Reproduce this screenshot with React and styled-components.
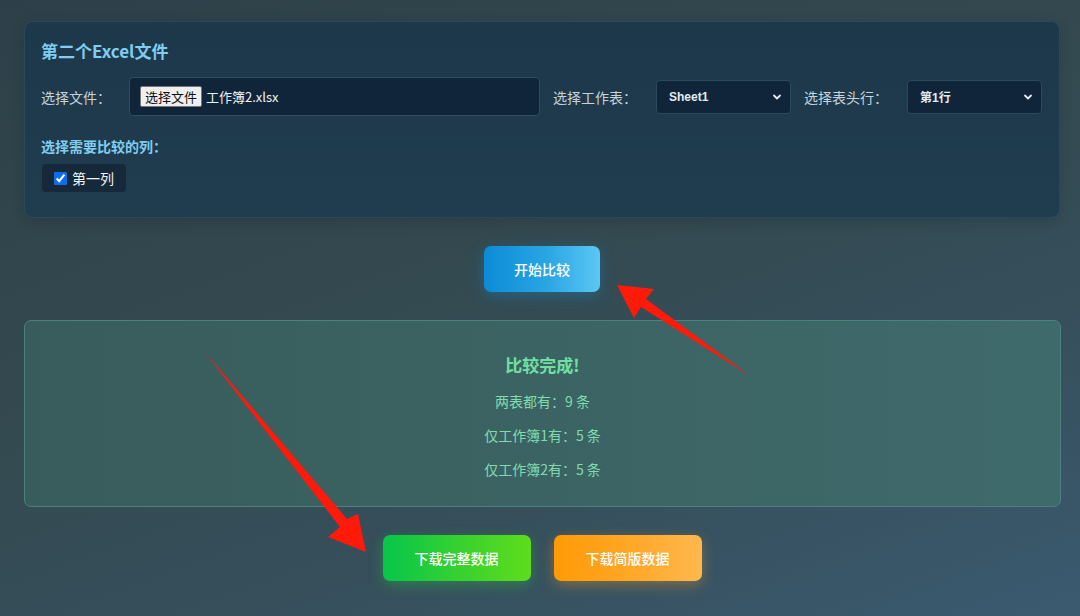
import React from "react";
import styled, { createGlobalStyle } from "styled-components";

const GlobalStyle = createGlobalStyle`
  html, body { margin: 0; padding: 0; }
  body {
    width: 1080px;
    height: 616px;
    overflow: hidden;
    background: linear-gradient(160deg, #2d4049 0%, #33494f 40%, #364f5b 70%, #3b5a70 100%);
    font-family: "Noto Sans CJK SC", "Noto Sans", sans-serif;
  }
`;

const Page = styled.div`
  position: relative;
  display: flex;
  flex-direction: column;
  align-items: stretch;
  padding: 21px 20px 0 24px;
  height: 616px;
  box-sizing: border-box;
`;

const Card = styled.section`
  background: linear-gradient(180deg, #1e384b 0%, #203c4f 100%);
  border: 1px solid #2a4a5c;
  border-radius: 9px;
  padding: 18px 17px 25px 16px;
  box-shadow: 0 4px 14px rgba(0, 0, 0, 0.15);
`;

const CardTitle = styled.h3`
  margin: 0;
  font-size: 17px;
  line-height: 22px;
  font-weight: 700;
  color: #7fcdf0;
`;

const Row = styled.div`
  display: flex;
  align-items: center;
  gap: 13px;
  margin-top: 15px;
  height: 39px;
`;

const Field = styled.div`
  display: flex;
  align-items: center;
  flex: ${(p) => (p.$grow ? 1 : "none")};
`;

const Label = styled.span`
  font-size: 14px;
  color: #c6d3dc;
  margin-right: ${(p) => p.$gap}px;
  white-space: nowrap;
`;

const FileBox = styled.div`
  flex: 1;
  height: 39px;
  box-sizing: border-box;
  display: flex;
  align-items: center;
  gap: 4px;
  padding: 0 10px;
  background: #10253a;
  border: 1px solid #2c4e62;
  border-radius: 4px;
`;

const FileButton = styled.button`
  font-family: "Noto Sans CJK SC", sans-serif;
  font-size: 13px;
  line-height: 18px;
  padding: 0 4px;
  height: 21px;
  background: #efefef;
  color: #111;
  border: 1px solid #767676;
  border-radius: 2px;
`;

const FileName = styled.span`
  font-size: 13px;
  color: #eef3f7;
`;

const SelectBox = styled.div`
  width: 135px;
  height: 34px;
  box-sizing: border-box;
  display: flex;
  align-items: center;
  justify-content: space-between;
  padding: 0 8px 0 12px;
  background: #10253a;
  border: 1px solid #2a4a5e;
  border-radius: 4px;
  color: #e3ebf1;
  font-family: "Liberation Sans", "Noto Sans CJK SC", sans-serif;
  font-size: 12px;
  font-weight: 700;
`;

const SectionLabel = styled.div`
  margin-top: 20px;
  font-size: 14px;
  line-height: 20px;
  font-weight: 700;
  color: #7fcdf0;
`;

const Chip = styled.label`
  margin-top: 8px;
  display: inline-flex;
  align-items: center;
  gap: 5px;
  width: 84px;
  height: 28px;
  box-sizing: border-box;
  padding-left: 12px;
  margin-left: 1px;
  background: #15293b;
  border-radius: 4px;
  color: #eef3f7;
  font-size: 14px;
  input {
    margin: 0;
    width: 13px;
    height: 13px;
    accent-color: #0b6cf0;
  }
`;

const Center = styled.div`
  display: flex;
  justify-content: center;
  gap: 23px;
  margin-top: 28px;
`;

const GradientButton = styled.button`
  height: 46px;
  width: ${(p) => p.$w}px;
  border: none;
  border-radius: 7px;
  color: #fff;
  font-family: "Noto Sans CJK SC", sans-serif;
  font-size: 14px;
  font-weight: 500;
  background: ${(p) => p.$bg};
  box-shadow: 0 4px 14px ${(p) => p.$glow};
`;

const Result = styled.section`
  margin-top: 28px;
  height: 187px;
  box-sizing: border-box;
  margin-right: -1px;
  background: linear-gradient(90deg, #385c5b 0%, #3c6363 50%, #3f6a6c 100%);
  border: 1px solid #4c827d;
  border-radius: 7px;
  display: flex;
  flex-direction: column;
  align-items: center;
  padding-top: 32px;
`;

const ResultTitle = styled.div`
  font-size: 17px;
  line-height: 24px;
  font-weight: 700;
  color: #6fe0a2;
`;

const ResultLine = styled.div`
  margin-top: 14px;
  font-size: 14px;
  line-height: 20px;
  color: #7fdcae;
`;

const Overlay = styled.svg`
  position: absolute;
  left: 0;
  top: 0;
  width: 1080px;
  height: 616px;
  pointer-events: none;
`;

const Chevron = () => (
  <svg width="10" height="10" viewBox="0 0 10 10">
    <path d="M2 3.5 L5 6.5 L8 3.5" fill="none" stroke="#e3ebf1" strokeWidth="1.8" strokeLinecap="round" strokeLinejoin="round" />
  </svg>
);

export default function App() {
  return (
    <>
      <GlobalStyle />
      <Page>
        <Card>
          <CardTitle>第二个Excel文件</CardTitle>
          <Row>
            <Field $grow>
              <Label $gap={18}>选择文件：</Label>
              <FileBox>
                <FileButton type="button">选择文件</FileButton>
                <FileName>工作簿2.xlsx</FileName>
              </FileBox>
            </Field>
            <Field>
              <Label $gap={19}>选择工作表：</Label>
              <SelectBox>
                <span>Sheet1</span>
                <Chevron />
              </SelectBox>
            </Field>
            <Field>
              <Label $gap={19}>选择表头行：</Label>
              <SelectBox>
                <span>第1行</span>
                <Chevron />
              </SelectBox>
            </Field>
          </Row>
          <SectionLabel>选择需要比较的列：</SectionLabel>
          <Chip>
            <input type="checkbox" defaultChecked />
            第一列
          </Chip>
        </Card>

        <Center>
          <GradientButton
            $w={116}
            $bg="linear-gradient(90deg, #0c8bd6 0%, #2aa6e4 55%, #5cc6f4 100%)"
            $glow="rgba(20, 140, 220, 0.35)"
          >
            开始比较
          </GradientButton>
        </Center>

        <Result>
          <ResultTitle>比较完成!</ResultTitle>
          <ResultLine>两表都有：9 条</ResultLine>
          <ResultLine>仅工作簿1有：5 条</ResultLine>
          <ResultLine>仅工作簿2有：5 条</ResultLine>
        </Result>

        <Center>
          <GradientButton
            $w={148}
            $bg="linear-gradient(90deg, #06c64a 0%, #3ad22e 55%, #5fdc1c 100%)"
            $glow="rgba(40, 210, 60, 0.35)"
          >
            下载完整数据
          </GradientButton>
          <GradientButton
            $w={148}
            $bg="linear-gradient(90deg, #ff9a06 0%, #ffa82a 55%, #ffb84e 100%)"
            $glow="rgba(255, 160, 30, 0.35)"
          >
            下载简版数据
          </GradientButton>
        </Center>

        <Overlay viewBox="0 0 1080 616">
          <polygon points="750,376 646,299 654,289 617,285 634,318 641,307" fill="#ff1a0a" />
          <polygon points="204,351 347,519 358,514 366,552 328,537 340,527" fill="#ff1a0a" />
        </Overlay>
      </Page>
    </>
  );
}
